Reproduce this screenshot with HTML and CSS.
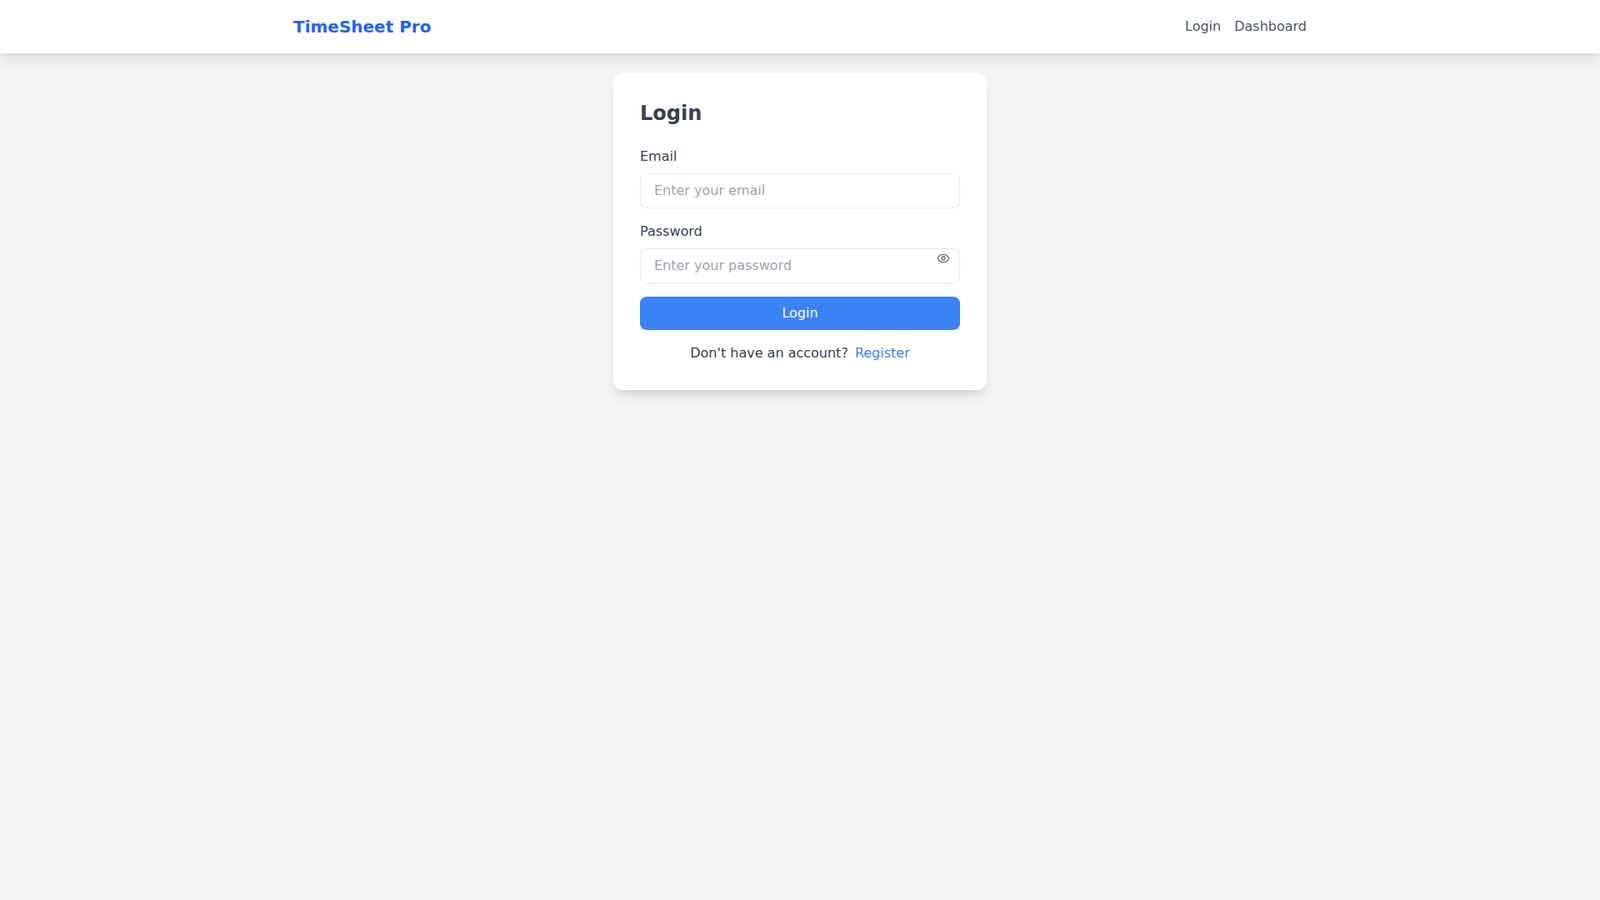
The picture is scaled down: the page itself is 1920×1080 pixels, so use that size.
FILE: index.html
```html
<!DOCTYPE html>
<html lang="en">
  <head>
    <meta charset="UTF-8" />
    <meta name="viewport" content="width=device-width, initial-scale=1.0" />
    <title>Login</title>
    <link rel="stylesheet" href="styles.css">
  </head>
  <body>
    <nav class="navbar">
      <div class="nav-inner">
        <a class="brand" href="#">TimeSheet Pro</a>
        <div class="nav-links">
          <a href="#">Login</a>
          <a href="#">Dashboard</a>
        </div>
      </div>
    </nav>
    <main class="page">
      <div class="login-card">
        <h2>Login</h2>
        <form class="login-form">
          <div class="field">
            <label for="email">Email</label>
            <input type="email" id="email" placeholder="Enter your email" />
          </div>
          <div class="field">
            <label for="password">Password</label>
            <div class="password-wrap">
              <input type="password" id="password" placeholder="Enter your password" />
              <svg class="eye" viewBox="0 0 24 24" fill="none" stroke="currentColor" stroke-width="2" stroke-linecap="round" stroke-linejoin="round">
                <path d="M2.06 12.35a1 1 0 0 1 0-.7 10.75 10.75 0 0 1 19.88 0 1 1 0 0 1 0 .7 10.75 10.75 0 0 1-19.88 0" />
                <circle cx="12" cy="12" r="3" />
              </svg>
            </div>
          </div>
          <button type="submit" class="submit">Login</button>
        </form>
        <p class="register"><span>Don't have an account?</span> <a href="#">Register</a></p>
      </div>
    </main>
  </body>
</html>
```

FILE: styles.css
```css
* {
  box-sizing: border-box;
}
body {
  margin: 0;
  min-height: 100vh;
  background: #f3f4f6;
  font-family: "DejaVu Sans", sans-serif;
  font-size: 16px;
  line-height: 24px;
  color: #374151;
}
a {
  text-decoration: none;
}
.navbar {
  height: 64px;
  background: #fff;
  box-shadow: 0 10px 15px -3px rgba(0, 0, 0, 0.1), 0 4px 6px -4px rgba(0, 0, 0, 0.1);
}
.nav-inner {
  display: flex;
  justify-content: space-between;
  align-items: center;
  max-width: 1280px;
  height: 100%;
  margin: 0 auto;
  padding: 0 32px;
}
.brand {
  font-size: 20px;
  line-height: 28px;
  font-weight: 700;
  color: #2563eb;
}
.nav-links {
  display: flex;
  gap: 16px;
}
.nav-links a {
  color: #4b5563;
}
.page {
  display: flex;
  justify-content: center;
  padding-top: 24px;
}
.login-card {
  width: 448px;
  padding: 32px;
  background: #fff;
  border-radius: 12px;
  box-shadow: 0 10px 15px -3px rgba(0, 0, 0, 0.1), 0 4px 6px -4px rgba(0, 0, 0, 0.1);
}
h2 {
  margin: 0 0 24px;
  font-size: 24px;
  line-height: 32px;
  font-weight: 700;
  color: #374151;
}
.login-form {
  display: flex;
  flex-direction: column;
  gap: 16px;
}
.login-form label {
  display: block;
  margin-bottom: 8px;
  color: #374151;
}
.login-form input {
  display: block;
  width: 100%;
  height: 42px;
  padding: 7px 16px 9px;
  border: 1px solid #e5e7eb;
  border-radius: 8px;
  font-family: inherit;
  font-size: 16px;
  line-height: 24px;
  color: #374151;
  background: #fff;
}
.login-form input::placeholder {
  color: #9ca3af;
}
.password-wrap {
  position: relative;
}
.eye {
  position: absolute;
  top: 4px;
  right: 12px;
  width: 16px;
  height: 16px;
  color: #6b7280;
}
.submit {
  height: 40px;
  padding: 0;
  border: none;
  border-radius: 8px;
  background: #3b82f6;
  color: #fff;
  font-family: inherit;
  font-size: 16px;
  line-height: 24px;
}
.register {
  display: flex;
  justify-content: center;
  gap: 8px;
  margin: 16px 0 0;
}
.register a {
  color: #3b82f6;
}
```
